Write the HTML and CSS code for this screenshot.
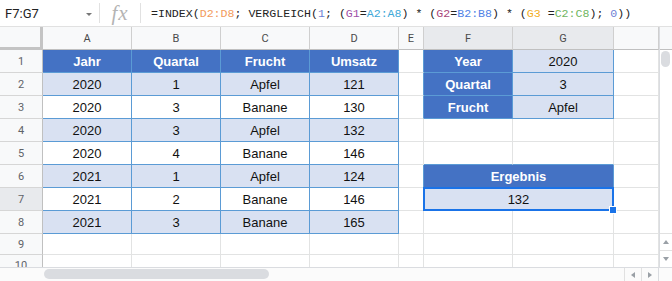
FILE: index.html
```html
<!DOCTYPE html>
<html lang="de">
<head>
<meta charset="UTF-8">
<meta name="viewport" content="width=device-width, initial-scale=1.0">
<title>INDEX / VERGLEICH</title>
<link rel="stylesheet" href="styles.css">
</head>
<body>
<div class="app">
  <div class="formula-bar">
    <div class="name-box"><span>F7:G7</span><span class="caret"></span></div>
    <div class="sep"></div>
    <div class="fx">fx</div>
    <div class="sep"></div>
    <div class="formula">=INDEX(<span class="f-d">D2:D8</span>; VERGLEICH(<span class="f-n">1</span>; (<span class="f-g1">G1</span>=<span class="f-a">A2:A8</span>) * (<span class="f-g2">G2</span>=<span class="f-b">B2:B8</span>) * (<span class="f-g3">G3</span> =<span class="f-c">C2:C8</span>); <span class="f-n">0</span>))</div>
  </div>

  <div class="sheet">
    <div class="grid">
      <!-- column headers -->
      <div class="corner"></div>
      <div class="ch">A</div><div class="ch">B</div><div class="ch">C</div><div class="ch">D</div>
      <div class="ch">E</div><div class="ch ch-sel">F</div><div class="ch ch-sel">G</div><div class="ch"></div>

      <!-- 1 -->
      <div class="rh">1</div>
      <div class="c t hd">Jahr</div><div class="c t hd">Quartal</div><div class="c t hd">Frucht</div><div class="c t hd">Umsatz</div>
      <div class="c to-blue"></div>
      <div class="c t hd">Year</div><div class="c t bd">2020</div><div class="c"></div>

      <!-- 2 -->
      <div class="rh">2</div>
      <div class="c t bd">2020</div><div class="c t bd">1</div><div class="c t bd">Apfel</div><div class="c t bd">121</div>
      <div class="c to-blue"></div>
      <div class="c t hd">Quartal</div><div class="c t bd">3</div><div class="c"></div>

      <!-- 3 -->
      <div class="rh">3</div>
      <div class="c t">2020</div><div class="c t">3</div><div class="c t">Banane</div><div class="c t">130</div>
      <div class="c to-blue"></div>
      <div class="c t hd">Frucht</div><div class="c t bd">Apfel</div><div class="c"></div>

      <!-- 4 -->
      <div class="rh">4</div>
      <div class="c t bd">2020</div><div class="c t bd">3</div><div class="c t bd">Apfel</div><div class="c t bd">132</div>
      <div class="c"></div><div class="c"></div><div class="c"></div><div class="c"></div>

      <!-- 5 -->
      <div class="rh">5</div>
      <div class="c t">2020</div><div class="c t">4</div><div class="c t">Banane</div><div class="c t">146</div>
      <div class="c"></div><div class="c under-blue"></div><div class="c under-blue"></div><div class="c"></div>

      <!-- 6 -->
      <div class="rh">6</div>
      <div class="c t bd">2021</div><div class="c t bd">1</div><div class="c t bd">Apfel</div><div class="c t bd">124</div>
      <div class="c to-blue"></div>
      <div class="c t hd span2">Ergebnis</div><div class="c"></div>

      <!-- 7 -->
      <div class="rh rh-sel">7</div>
      <div class="c t">2021</div><div class="c t">2</div><div class="c t">Banane</div><div class="c t">146</div>
      <div class="c to-blue"></div>
      <div class="c t bd span2 selected">132<span class="handle"></span></div><div class="c"></div>

      <!-- 8 -->
      <div class="rh">8</div>
      <div class="c t bd">2021</div><div class="c t bd">3</div><div class="c t bd">Banane</div><div class="c t bd">165</div>
      <div class="c"></div><div class="c"></div><div class="c"></div><div class="c"></div>

      <!-- 9 -->
      <div class="rh">9</div>
      <div class="c"></div><div class="c"></div><div class="c"></div><div class="c"></div>
      <div class="c"></div><div class="c"></div><div class="c"></div><div class="c"></div>

      <!-- 10 -->
      <div class="rh">10</div>
      <div class="c"></div><div class="c"></div><div class="c"></div><div class="c"></div>
      <div class="c"></div><div class="c"></div><div class="c"></div><div class="c"></div>
    </div>

    <div class="vscroll">
      <div class="vs-head"></div>
      <div class="vs-track"><div class="vs-thumb"></div></div>
      <div class="vs-btn"><span class="tri-up"></span></div>
      <div class="vs-btn"><span class="tri-down"></span></div>
    </div>
  </div>

  <div class="hscroll">
    <div class="hs-gap"></div>
    <div class="hs-track"><div class="hs-thumb"></div></div>
    <div class="hs-btn"><span class="tri-left"></span></div>
    <div class="hs-btn"><span class="tri-right"></span></div>
    <div class="hs-corner"></div>
  </div>
</div>
</body>
</html>
```

FILE: styles.css
```css
body { margin: 0; background: #fff; }
.app { width: 672px; height: 281px; overflow: hidden; font-family: "Liberation Sans", Arial, sans-serif; }

/* formula bar */
.formula-bar { height: 26px; border-bottom: 1px solid #e1e1e1; display: flex; align-items: center; }
.name-box { width: 99px; box-sizing: border-box; padding: 0 7px 0 5px; display: flex; justify-content: space-between; align-items: center; font-family: Roboto, sans-serif; font-size: 13px; color: #222; }
.caret { width: 0; height: 0; border-left: 3px solid transparent; border-right: 3px solid transparent; border-top: 3px solid #777; margin-top: 2px; }
.sep { width: 1px; height: 20px; background: #e1e1e1; }
.fx { width: 40px; text-align: center; font-family: "Liberation Serif", serif; font-style: italic; font-size: 21px; color: #b4b4b4; line-height: 24px; letter-spacing: 1px; }
.formula { padding-left: 10px; font-family: "Liberation Mono", monospace; font-size: 11.6px; color: #222; white-space: nowrap; }
.f-d { color: #f29b5c; }
.f-n { color: #6d7fd4; }
.f-g1 { color: #9e4fa8; }
.f-a { color: #40a9d8; }
.f-g2 { color: #a8467a; }
.f-b { color: #4f82e6; }
.f-g3 { color: #f2ad1c; }
.f-c { color: #6fb65f; }

/* sheet */
.sheet { display: flex; height: 240px; }
.grid { width: 659px; height: 240px; overflow: hidden; display: grid; grid-template-columns: 43px 89px 89px 89px 89px 25px 89px 101px 45px; grid-template-rows: repeat(9, 23px) 21px 21px; }
.grid > div { box-sizing: border-box; }

.corner { background: #f8f9fa; border-right: 3px solid #c4c4c4; border-bottom: 3px solid #c4c4c4; }
.ch { background: #f8f9fa; border-right: 1px solid #cfcfcf; border-bottom: 1px solid #c0c0c0; display: flex; align-items: center; justify-content: center; font-family: Roboto, sans-serif; font-size: 11px; color: #4a4a4a; }
.ch-sel { background: #e8eaed; }
.rh { background: #f8f9fa; border-right: 1px solid #c0c0c0; border-bottom: 1px solid #d6d6d6; display: flex; align-items: center; justify-content: center; font-family: Roboto, sans-serif; font-size: 11px; color: #5f6368; }
.rh-sel { background: #e8eaed; }

.c { border-right: 1px solid #e2e3e3; border-bottom: 1px solid #e2e3e3; display: flex; align-items: center; justify-content: center; font-size: 13px; color: #111; }
.t { border-color: #5b9bd5; }
.hd { background: #4472c4; color: #fff; font-weight: bold; }
.bd { background: #d9e1f2; }
.to-blue { border-right-color: #5b9bd5; }
.under-blue { border-bottom-color: #5b9bd5; }
.span2 { grid-column: span 2; }

.selected { position: relative; }
.selected::after { content: ""; position: absolute; left: -1px; top: -1px; right: -1px; bottom: -1px; border: 2px solid #1a73e8; }
.handle { position: absolute; right: -4px; bottom: -4px; width: 6px; height: 6px; background: #1a73e8; border: 1px solid #fff; z-index: 1; }

/* vertical scrollbar */
.vscroll { width: 13px; border-left: 1px solid #dadce0; box-sizing: border-box; display: flex; flex-direction: column; }
.vs-head { height: 23px; box-sizing: border-box; background: #f8f9fa; border-bottom: 1px solid #c0c0c0; }
.vs-track { flex: 1; padding: 1px 2px 0 1px; }
.vs-thumb { height: 16px; background: #dadce0; border-radius: 5px; }
.vs-btn { height: 16px; border-top: 1px solid #e1e1e1; display: flex; align-items: center; justify-content: center; }
.tri-up { border-left: 3px solid transparent; border-right: 3px solid transparent; border-bottom: 4px solid #9aa0a6; }
.tri-down { border-left: 3px solid transparent; border-right: 3px solid transparent; border-top: 4px solid #9aa0a6; }

/* horizontal scrollbar */
.hscroll { height: 14px; border-top: 1px solid #dadce0; box-sizing: border-box; display: flex; background: #fbfbfb; }
.hs-gap { width: 44px; }
.hs-track { flex: 1; padding-top: 1px; }
.hs-thumb { width: 225px; height: 10px; background: #dadce0; border-radius: 5px; }
.hs-btn { width: 16px; border-left: 1px solid #e1e1e1; display: flex; align-items: center; justify-content: center; }
.tri-left { border-top: 3px solid transparent; border-bottom: 3px solid transparent; border-right: 4px solid #9aa0a6; }
.tri-right { border-top: 3px solid transparent; border-bottom: 3px solid transparent; border-left: 4px solid #9aa0a6; }
.hs-corner { width: 13px; border-left: 1px solid #dadce0; }
```
